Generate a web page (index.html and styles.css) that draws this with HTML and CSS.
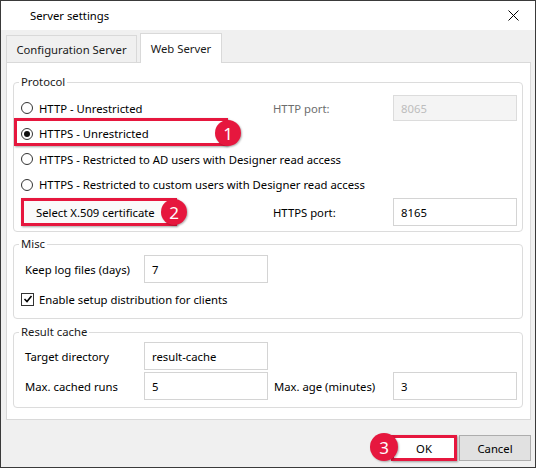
FILE: index.html
```html
<!DOCTYPE html>
<html>
<head>
<meta charset="utf-8">
<link rel="stylesheet" href="styles.css">
</head>
<body>
<div class="window">
  <div class="titlebar">
    <span class="title">Server settings</span>
    <svg class="close" width="11" height="11" viewBox="0 0 11 11"><path d="M0.5 0.5 L10.5 10.5 M10.5 0.5 L0.5 10.5" stroke="#000" stroke-width="1" fill="none"/></svg>
  </div>
  <div class="tabs">
    <div class="tab tab-config">Configuration Server</div>
    <div class="tab tab-web active">Web Server</div>
  </div>
  <div class="panel">
    <fieldset class="group protocol">
      <legend>Protocol</legend>
      <div class="prow r1">
        <div class="opt"><span class="radio"></span>HTTP - Unrestricted</div>
        <span class="plabel disabled">HTTP port:</span>
        <span class="input input-disabled">8065</span>
      </div>
      <div class="prow r2">
        <div class="opt"><span class="radio checked"></span>HTTPS - Unrestricted</div>
        <span class="hl hl1"></span>
        <span class="badge b1">1</span>
      </div>
      <div class="prow r3">
        <div class="opt"><span class="radio"></span>HTTPS - Restricted to AD users with Designer read access</div>
      </div>
      <div class="prow r4">
        <div class="opt"><span class="radio"></span>HTTPS - Restricted to custom users with Designer read access</div>
      </div>
      <div class="prow r5">
        <div class="cert-cell">
          <span class="cert-btn">Select X.509 certificate</span>
          <span class="hl hl2"></span>
          <span class="badge b2">2</span>
        </div>
        <span class="plabel">HTTPS port:</span>
        <span class="input input-tall">8165</span>
      </div>
    </fieldset>

    <fieldset class="group misc">
      <legend>Misc</legend>
      <div class="frow">
        <span class="flabel">Keep log files (days)</span>
        <span class="input input-tall">7</span>
      </div>
      <div class="crow">
        <span class="checkbox"><svg width="10" height="10" viewBox="0 0 10 10"><path d="M1.5 5 L4 7.5 L8.5 2" stroke="#000" stroke-width="1.6" fill="none"/></svg></span>
        Enable setup distribution for clients
      </div>
    </fieldset>

    <fieldset class="group cache">
      <legend>Result cache</legend>
      <div class="frow">
        <span class="flabel">Target directory</span>
        <span class="input input-tall">result-cache</span>
      </div>
      <div class="frow">
        <span class="flabel">Max. cached runs</span>
        <span class="input input-tall">5</span>
        <span class="flabel2">Max. age (minutes)</span>
        <span class="input input-tall">3</span>
      </div>
    </fieldset>
  </div>
  <div class="footer">
    <div class="btn ok">OK
      <span class="hl hl3"></span>
      <span class="badge b3">3</span>
    </div>
    <div class="btn cancel">Cancel</div>
  </div>
</div>
</body>
</html>
```

FILE: styles.css
```css
* { box-sizing: border-box; }
body {
  margin: 0;
  font-family: "Noto Sans", "Open Sans", sans-serif;
  font-size: 11.3px;
  color: #000;
}
.window {
  width: 536px;
  height: 468px;
  border: 1px solid #3a3a3a;
  background: #f0f0f0;
  display: flex;
  flex-direction: column;
}
.titlebar {
  height: 29px;
  flex: none;
  background: #fff;
  display: flex;
  align-items: center;
  justify-content: space-between;
  padding: 0 16px 0 29px;
}
.close { display: block; }

.tabs {
  display: flex;
  align-items: flex-end;
  padding: 3px 0 0 5px;
  flex: none;
}
.tab {
  height: 27px;
  border: 1px solid #d9d9d9;
  border-bottom: none;
  background: #f0f0f0;
  display: flex;
  align-items: center;
  justify-content: center;
  color: #1a1a1a;
}
.tab-config { width: 131px; }
.tab-web { width: 82px; }
.tab.active {
  height: 30px;
  background: #fff;
  margin-left: 3px;
  margin-bottom: -1px;
  position: relative;
  z-index: 1;
}

.panel {
  flex: none;
  margin: 0 4px 0 5px;
  background: #fff;
  border: 1px solid #d9d9d9;
  padding: 11px 7px 11px 6px;
}
.group {
  margin: 0;
  padding: 0;
  border: 1px solid #dcdcdc;
  border-radius: 4px;
  min-width: 0;
}
.group legend {
  margin-left: 5px;
  padding: 0 2px;
  line-height: 16px;
  color: #1a1a1a;
}
.protocol { padding: 5px 0 4px 0; }
.misc { margin-top: 4px; padding: 2px 0 4px 0; }
.cache { margin-top: 5px; padding: 1px 0 6px 0; }

.prow {
  display: flex;
  align-items: center;
  padding-left: 7px;
  position: relative;
}
.r1 { height: 26px; }
.r2 { height: 25px; }
.r3 { height: 26px; }
.r4 { height: 25px; }
.r5 { height: 30px; }
.opt {
  display: flex;
  align-items: center;
  width: 252px;
  white-space: nowrap;
}
.radio {
  width: 12px;
  height: 12px;
  border: 1px solid #333;
  border-radius: 50%;
  background: #fff;
  margin-right: 6px;
  flex: none;
  display: flex;
  align-items: center;
  justify-content: center;
}
.radio.checked::after {
  content: "";
  width: 6px;
  height: 6px;
  border-radius: 50%;
  background: #111;
}
.plabel { width: 120px; }
.plabel.disabled { color: #6d6d6d; }

.input {
  width: 124px;
  height: 27px;
  border: 1px solid #d4d4d4;
  background: #fff;
  padding-left: 7px;
  display: flex;
  align-items: center;
  flex: none;
}
.input-disabled {
  height: 26px;
  background: #f4f4f4;
  border-color: #dcdcdc;
  color: #bdbdbd;
}
.input-tall { height: 28px; }

.cert-cell {
  width: 252px;
  height: 28px;
  position: relative;
  display: flex;
  align-items: center;
}
.cert-btn {
  width: 152px;
  height: 26px;
  background: #fafafa;
  border: 1px solid #d0d0d0;
  padding-left: 14px;
  display: flex;
  align-items: center;
}

.hl {
  position: absolute;
  border: 3px solid #e6173e;
  box-shadow: 1px 1px 2px rgba(0,0,0,0.35);
  pointer-events: none;
}
.hl1 { left: 0; top: -3px; width: 214px; height: 28px; }
.hl2 { left: 0; top: 0; width: 156px; height: 28px; }
.hl3 { left: -2px; top: -1px; right: -2px; bottom: -1px; }

.badge {
  position: absolute;
  width: 26px;
  height: 26px;
  border-radius: 50%;
  background: #e6173e;
  color: #fff;
  font-size: 17px;
  display: flex;
  align-items: center;
  justify-content: center;
  box-shadow: 1px 1px 2px rgba(0,0,0,0.3);
  z-index: 2;
}
.b1 { left: 201px; top: -1px; }
.b2 { left: 140px; top: 1px; }
.b3 { left: -23px; top: -3px; width: 28px; height: 28px; }

.frow {
  display: flex;
  align-items: center;
  height: 30px;
  padding-left: 11px;
}
.flabel { width: 119px; }
.flabel2 { width: 125px; padding-left: 6px; }
.crow {
  display: flex;
  align-items: center;
  height: 30px;
  padding-left: 7px;
}
.checkbox {
  width: 13px;
  height: 13px;
  border: 1px solid #333;
  background: #fff;
  margin-right: 5px;
  display: flex;
  align-items: center;
  justify-content: center;
}
.checkbox svg { display: block; }

.footer {
  flex: 1;
  display: flex;
  justify-content: flex-end;
  align-items: flex-start;
  gap: 3px;
  padding: 15px 4px 0 0;
}
.btn {
  height: 26px;
  border: 1px solid #adadad;
  background: #e1e1e1;
  display: flex;
  align-items: center;
  justify-content: center;
}
.ok { width: 64px; background: #fff; position: relative; }
.cancel { width: 72px; }
```
